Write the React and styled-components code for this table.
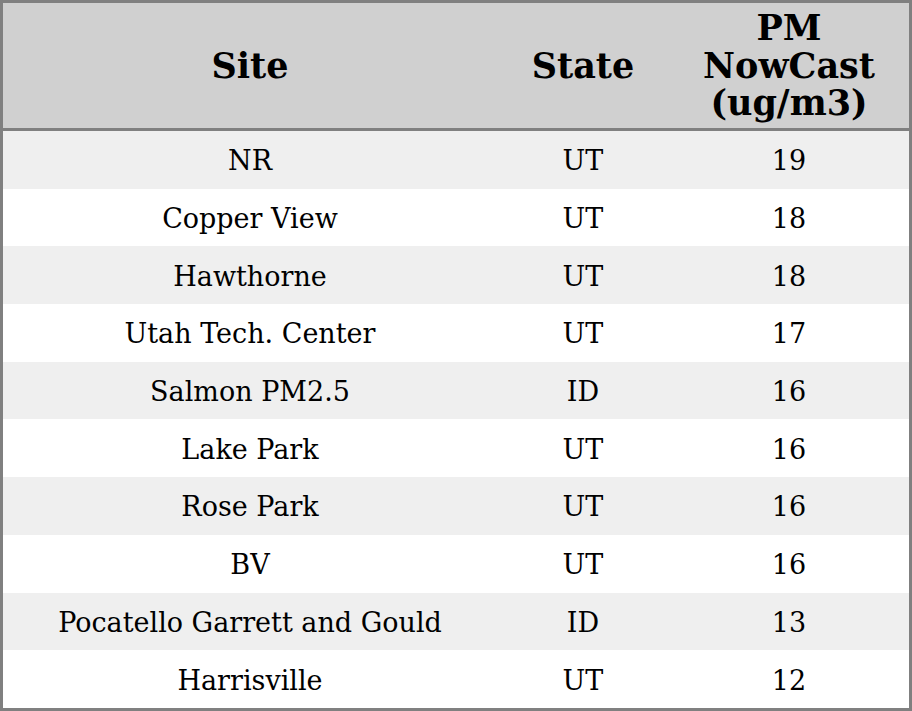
import styled, { createGlobalStyle } from "styled-components";

const GlobalStyle = createGlobalStyle`
  html, body {
    margin: 0;
    padding: 0;
    background: #ffffff;
  }
`;

const StyledTable = styled.table`
  width: 912px;
  height: 711px;
  border: 3px solid #808080;
  border-spacing: 0;
  border-collapse: separate;
  font-family: "DejaVu Serif", serif;
  color: #000000;
`;

const HeaderCell = styled.th`
  width: ${(props) => props.$width}px;
  height: 125px;
  padding: 0;
  background: #d0d0d0;
  border-bottom: 3px solid #808080;
  font-size: 35px;
  line-height: 37.5px;
  font-weight: bold;
  text-align: center;
  vertical-align: middle;
`;

const Row = styled.tr`
  background: ${(props) => (props.$striped ? "#efefef" : "#ffffff")};
`;

const Cell = styled.td`
  padding: 2px 0 0;
  font-size: 27px;
  text-align: center;
  vertical-align: middle;
`;

const rows = [
  { site: "NR", state: "UT", value: 19 },
  { site: "Copper View", state: "UT", value: 18 },
  { site: "Hawthorne", state: "UT", value: 18 },
  { site: "Utah Tech. Center", state: "UT", value: 17 },
  { site: "Salmon PM2.5", state: "ID", value: 16 },
  { site: "Lake Park", state: "UT", value: 16 },
  { site: "Rose Park", state: "UT", value: 16 },
  { site: "BV", state: "UT", value: 16 },
  { site: "Pocatello Garrett and Gould", state: "ID", value: 13 },
  { site: "Harrisville", state: "UT", value: 12 },
];

export default function App() {
  return (
    <>
      <GlobalStyle />
      <StyledTable>
        <thead>
          <tr>
            <HeaderCell $width={494}>Site</HeaderCell>
            <HeaderCell $width={172}>State</HeaderCell>
            <HeaderCell $width={240}>
              PM
              <br />
              NowCast
              <br />
              (ug/m3)
            </HeaderCell>
          </tr>
        </thead>
        <tbody>
          {rows.map((row, i) => (
            <Row key={row.site} $striped={i % 2 === 0}>
              <Cell>{row.site}</Cell>
              <Cell>{row.state}</Cell>
              <Cell>{row.value}</Cell>
            </Row>
          ))}
        </tbody>
      </StyledTable>
    </>
  );
}
